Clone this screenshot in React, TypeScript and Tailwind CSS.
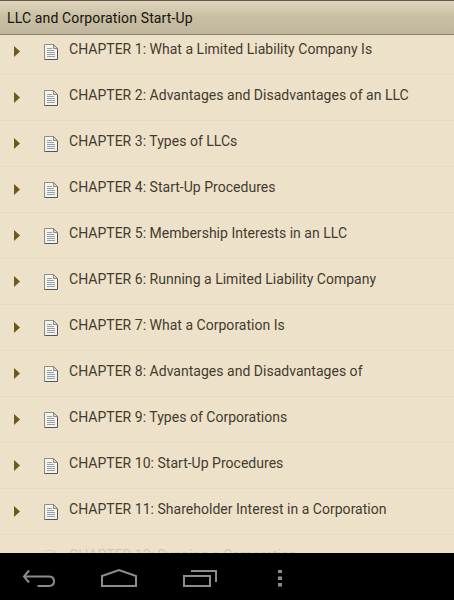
const CHAPTERS = [
  "What a Limited Liability Company Is",
  "Advantages and Disadvantages of an LLC",
  "Types of LLCs",
  "Start-Up Procedures",
  "Membership Interests in an LLC",
  "Running a Limited Liability Company",
  "What a Corporation Is",
  "Advantages and Disadvantages of",
  "Types of Corporations",
  "Start-Up Procedures",
  "Shareholder Interest in a Corporation",
  "Running a Corporation",
];

function PageIcon() {
  return (
    <svg width="14" height="16" viewBox="0 0 14 16" fill="none" className="shrink-0">
      <path d="M.5.5h8.8l4.2 4.2v10.8H.5z" fill="#f4f4ee" />
      <path d="M.5 15.5V.5h8.8" stroke="#8d8e86" />
      <path d="M9.3.5l4.2 4.2v10.8H.5" stroke="#55564f" />
      <path d="M9.5 1v3.5H13" stroke="#8a8b82" fill="#dcdcd4" />
      <path d="M3 4.5h5M3 6.5h7M3 8.5h8M3 10.5h8M3 12.5h8" stroke="#9aa1a4" />
    </svg>
  );
}

function ChapterRow({ number, title, faded }: { number: number; title: string; faded: boolean }) {
  return (
    <li className="h-[46px] shrink-0 border-b border-[#e2d9ca]">
      <div className={`flex items-start pl-3.5 ${faded ? "opacity-15" : ""}`}>
        <svg width="6" height="11" viewBox="0 0 6 11" className={`mt-[17px] shrink-0 ${faded ? "invisible" : ""}`}>
          <path d="M0 0l6 5.500-6 5.500z" fill="#71581a" />
        </svg>
        <div className="ml-6 mt-[15px]">
          <PageIcon />
        </div>
        <span className="ml-[11px] mt-2.5 whitespace-nowrap text-[14px] leading-5 tracking-[0.02px] text-[#443b2e]">
          CHAPTER {number}: {title}
        </span>
      </div>
    </li>
  );
}

function NavBar() {
  return (
    <nav className="flex h-[47px] shrink-0 items-start bg-black pl-[22px] pt-[15px]">
      <svg width="34" height="20" viewBox="0 0 34 20" fill="none" stroke="#8c8c8c" strokeWidth="2">
        <path d="M7 2.500L2 8.500l5 6M2 8.500h25c3.300 0 5 2 5 4.800S30.300 18 27 18H15.500" />
      </svg>
      <svg width="38" height="20" viewBox="0 0 38 20" fill="none" stroke="#8c8c8c" strokeWidth="2" className="ml-[44px]">
        <path d="M2 18V8l17-6 17 6v10z" />
      </svg>
      <svg width="36" height="20" viewBox="0 0 36 20" fill="none" stroke="#8c8c8c" strokeWidth="2" className="ml-[44px]">
        <path d="M2 8h26v10H2zM9 3h25v11" />
      </svg>
      <svg width="4" height="20" viewBox="0 0 4 20" fill="#8c8c8c" className="ml-[60px]">
        <path d="M0 2h4v3H0zM0 8.500h4v3.500H0zM0 15h4v3.500H0z" />
      </svg>
    </nav>
  );
}

export default function App() {
  return (
    <div className="flex h-[600px] w-[454px] flex-col overflow-hidden bg-[#ede1ca] font-['Roboto',sans-serif]">
      <header className="flex h-[35px] shrink-0 items-center border-t border-b border-t-[#66564a] border-b-[#8c846c] bg-linear-to-b from-[#e0d6bd] via-[#c8bfa3] to-[#c0b69e] pl-[7px]">
        <h1 className="text-[14px] leading-5 tracking-[0.14px] text-[#15120d]">LLC and Corporation Start-Up</h1>
      </header>
      <main className="min-h-0 flex-1 overflow-hidden">
        <ul className="-mt-1.5 flex flex-col">
          {CHAPTERS.map((title, i) => (
            <ChapterRow key={i} number={i + 1} title={title} faded={i === 11} />
          ))}
        </ul>
      </main>
      <NavBar />
    </div>
  );
}
